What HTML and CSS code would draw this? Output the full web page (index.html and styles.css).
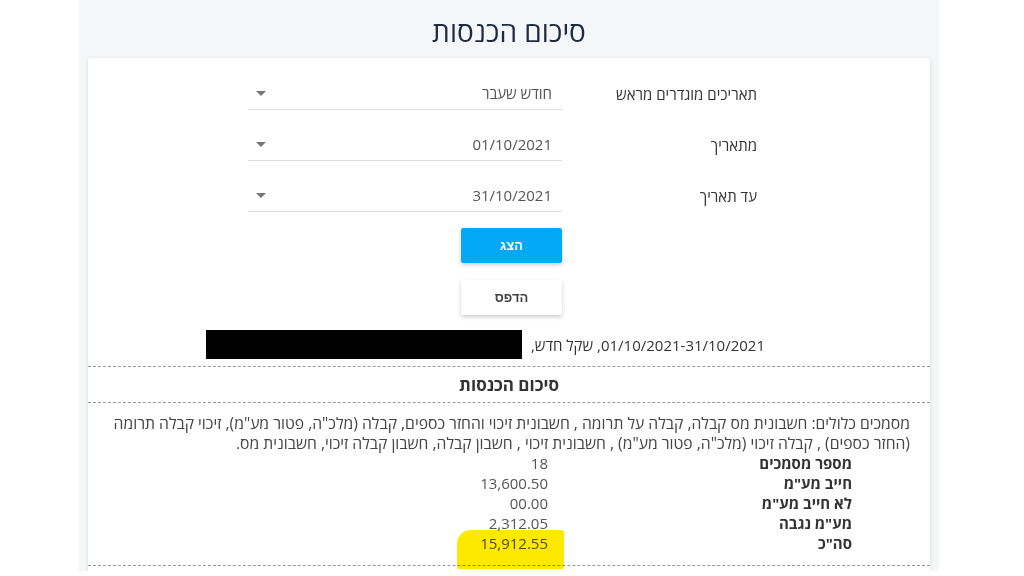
FILE: index.html
```html
<!DOCTYPE html>
<html lang="he" dir="rtl">

<head>
	<title>סיכום הכנסות</title>
	<meta charset=utf-8>
	<meta name=viewport content="width=device-width, initial-scale=1">
	<link rel="stylesheet" href="styles.css">
</head>

<body>
	<div class="page">
		<h1 class="page-title">סיכום הכנסות</h1>
		<div class="card">
			<div class="filters">
				<div class="filter-row">
					<div class="filter-label">תאריכים מוגדרים מראש</div>
					<div class="select">
						<span class="select-value">חודש שעבר</span>
						<span class="select-arrow"></span>
					</div>
				</div>
				<div class="filter-row">
					<div class="filter-label">מתאריך</div>
					<div class="select">
						<span class="select-value">01/10/2021</span>
						<span class="select-arrow"></span>
					</div>
				</div>
				<div class="filter-row">
					<div class="filter-label">עד תאריך</div>
					<div class="select">
						<span class="select-value">31/10/2021</span>
						<span class="select-arrow"></span>
					</div>
				</div>
			</div>
			<div class="actions">
				<button class="btn btn-primary">הצג</button>
				<button class="btn btn-light">הדפס</button>
			</div>
			<div class="report-info">
				<span>01/10/2021-31/10/2021, שקל חדש,</span>
				<span class="redacted"></span>
			</div>
			<div class="report-title">סיכום הכנסות</div>
			<div class="report-body">
				<p class="doc-types">מסמכים כלולים: חשבונית מס קבלה, קבלה על תרומה , חשבונית זיכוי והחזר כספים, קבלה (מלכ"ה, פטור מע"מ), זיכוי קבלה תרומה<br>(החזר כספים) , קבלה זיכוי (מלכ"ה, פטור מע"מ) , חשבונית זיכוי , חשבון קבלה, חשבון קבלה זיכוי, חשבונית מס.</p>
				<div class="totals">
					<div class="totals-label">מספר מסמכים</div>
					<div class="totals-value">18</div>
					<div class="totals-label">חייב מע"מ</div>
					<div class="totals-value">13,600.50</div>
					<div class="totals-label">לא חייב מע"מ</div>
					<div class="totals-value">00.00</div>
					<div class="totals-label">מע"מ נגבה</div>
					<div class="totals-value">2,312.05</div>
					<div class="totals-label">סה"כ</div>
					<div class="totals-value"><span class="marked">15,912.55<span class="highlight"></span></span></div>
				</div>
			</div>
		</div>
	</div>
</body>

</html>
```

FILE: styles.css
```css
body {
	margin: 0;
	background: white;
	font-family: "Open Sans", "Liberation Sans", sans-serif;
	color: #333;
}

.page {
	width: 860px;
	height: 571px;
	margin-right: 85px;
	background: #f5f6f8;
	overflow: hidden;
}

.page-title {
	margin: 0;
	height: 58px;
	line-height: 62px;
	text-align: center;
	font-size: 28px;
	font-weight: 400;
	color: #1f2a44;
}

.card {
	margin: 0 9px;
	background: white;
	border-radius: 3px;
	box-shadow: 0 1px 4px rgba(0, 0, 0, 0.12);
	height: 520px;
}

/* filters */
.filters {
	padding-top: 19px;
	padding-right: 173px;
	display: flex;
	flex-direction: column;
	gap: 18px;
}

.filter-row {
	display: flex;
	align-items: center;
}

.filter-label {
	width: 195px;
	font-size: 15px;
	color: #333;
}

.select {
	width: 314px;
	height: 33px;
	border-bottom: 1px solid #ddd;
	display: flex;
	align-items: center;
	justify-content: space-between;
	padding: 0 10px 0 8px;
	box-sizing: border-box;
}

.select-value {
	font-size: 15px;
	color: #555;
}

.select-arrow {
	width: 0;
	height: 0;
	border-left: 5px solid transparent;
	border-right: 5px solid transparent;
	border-top: 5px solid #777;
}

/* buttons */
.actions {
	margin-top: 16px;
	display: flex;
	flex-direction: column;
	align-items: center;
	gap: 17px;
	padding-left: 5px;
}

.btn {
	width: 101px;
	height: 35px;
	border: none;
	border-radius: 2px;
	font-family: "Liberation Sans", sans-serif;
	font-size: 13px;
	font-weight: bold;
	cursor: pointer;
	box-shadow: 0 2px 4px rgba(0, 0, 0, 0.2);
}

.btn-primary {
	background: #03a9f4;
	color: white;
}

.btn-light {
	background: white;
	color: #444;
}

/* report */
.report-info {
	margin-top: 15px;
	padding-right: 165px;
	display: flex;
	align-items: center;
	gap: 9px;
	font-size: 15px;
	color: #333;
	height: 29px;
}

.redacted {
	width: 316px;
	height: 29px;
	background: black;
}

.report-title {
	margin-top: 7px;
	border-top: 1px dashed #999;
	border-bottom: 1px dashed #999;
	height: 35px;
	line-height: 35px;
	text-align: center;
	font-size: 17px;
	font-weight: bold;
	color: #333;
}

.report-body {
	padding: 10px 20px 12px;
	border-bottom: 1px dashed #999;
	font-size: 15px;
	line-height: 20px;
	color: #444;
}

.doc-types {
	margin: 0;
	font-size: 15.7px;
}

.totals {
	display: grid;
	grid-template-columns: 304px auto;
	padding-right: 58px;
}

.totals-label {
	font-weight: bold;
	color: #333;
}

.totals-value {
	color: #555;
}

.marked {
	position: relative;
}

.highlight {
	position: absolute;
	top: -3px;
	right: -16px;
	width: 107px;
	height: 39px;
	background: #fde800;
	border-radius: 14px 3px 2px 2px;
	mix-blend-mode: multiply;
}
```
